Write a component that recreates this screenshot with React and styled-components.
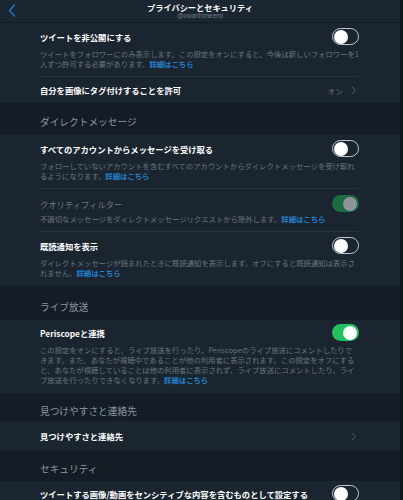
import React from 'react';
import styled, { createGlobalStyle } from 'styled-components';

const GlobalStyle = createGlobalStyle`
  html, body {
    margin: 0;
    padding: 0;
    background: #141d26;
  }
  body {
    font-family: "Noto Sans CJK JP", "Noto Sans", sans-serif;
    -webkit-font-smoothing: antialiased;
  }
`;

const Page = styled.div`
  width: 403px;
  height: 500px;
  overflow: hidden;
  box-sizing: border-box;
  background: #141d26;
  border-right: 3px solid #0f161d;
`;

const Header = styled.header`
  height: 22px;
  display: flex;
  flex-direction: column;
  align-items: center;
  justify-content: center;
  position: relative;
  background: #1b2633;
  border-bottom: 1px solid #121a22;
`;

const BackButton = styled.span`
  position: absolute;
  left: 8px;
  top: 4px;
  display: flex;
`;

const HeaderTitle = styled.div`
  color: #fff;
  font-size: 8.2px;
  font-weight: 700;
  line-height: 10px;
`;

const HeaderSub = styled.div`
  color: #6f7b87;
  font-size: 6.4px;
  line-height: 8px;
  font-family: "Liberation Sans", sans-serif;
`;

const Cell = styled.section`
  background: #1b2530;
  padding: 0 41px 0 40px;
`;

const SectionHeader = styled.div`
  height: ${(p) => p.h}px;
  box-sizing: border-box;
  padding-top: ${(p) => p.top}px;
  padding-left: 40px;
  color: #8b96a0;
  font-size: 9.7px;
  line-height: 12px;
`;

const Row = styled.div`
  padding: ${(p) => p.pt}px 0 ${(p) => p.pb}px;
  border-top: ${(p) => (p.divider ? '1px solid #27323d' : 'none')};
`;

const RowTop = styled.div`
  display: flex;
  align-items: center;
  justify-content: space-between;
  min-height: 17px;
`;

const Title = styled.div`
  color: ${(p) => (p.dim ? '#6d7883' : '#fff')};
  font-size: 8.3px;
  font-weight: ${(p) => (p.dim ? 400 : 700)};
  line-height: 12px;
`;

const DescText = styled.p`
  margin: ${(p) => p.mt || 4}px 0 0;
  color: #69747f;
  font-size: 7.35px;
  line-height: 10px;
  white-space: nowrap;
`;

const Link = styled.span`
  color: #2380cc;
  font-weight: 700;
`;

const NavRow = styled.div`
  height: ${(p) => p.h}px;
  display: flex;
  align-items: center;
  justify-content: space-between;
  border-top: ${(p) => (p.divider ? '1px solid #27323d' : 'none')};
`;

const NavValue = styled.div`
  display: flex;
  align-items: center;
  gap: 8px;
  color: #6d7883;
  font-size: 7.4px;
  margin-right: 3px;
`;

const Track = styled.div`
  width: 27px;
  height: 17px;
  box-sizing: border-box;
  border-radius: 9px;
  display: flex;
  align-items: center;
  justify-content: ${(p) => (p.on ? 'flex-end' : 'flex-start')};
  padding: 1px;
  background: ${(p) => (p.on ? (p.disabled ? '#1f6b41' : '#22c05f') : '#1b2530')};
  border: ${(p) => (p.on ? 'none' : '1px solid #c3c8cd')};
  flex-shrink: 0;
`;

const Knob = styled.div`
  width: 14px;
  height: 14px;
  border-radius: 50%;
  background: ${(p) => (p.disabled ? '#8f949a' : '#fff')};
  margin: ${(p) => (p.on ? '0 1px 0 0' : '0')};
`;

function Toggle({ on, disabled }) {
  return (
    <Track on={on} disabled={disabled}>
      <Knob on={on} disabled={disabled} />
    </Track>
  );
}

// lines are broken where the app breaks them
function Desc({ lines, mt }) {
  return (
    <DescText mt={mt}>
      {lines.map((line, i) => (
        <React.Fragment key={i}>
          {i > 0 && <br />}
          {line}
        </React.Fragment>
      ))}
      <Link>詳細はこちら</Link>
    </DescText>
  );
}

function Chevron({ color = '#5d6873', size = 9 }) {
  return (
    <svg width={size * 0.6} height={size} viewBox="0 0 6 10">
      <path d="M1 1l4 4-4 4" fill="none" stroke={color} strokeWidth="1" strokeLinecap="round" strokeLinejoin="round" />
    </svg>
  );
}

export default function App() {
  return (
    <Page>
      <GlobalStyle />
      <Header>
        <BackButton>
          <svg width="8" height="13" viewBox="0 0 8 13">
            <path d="M6.5 1L1.5 6.5l5 5.5" fill="none" stroke="#1f7fc9" strokeWidth="1.3" strokeLinecap="round" strokeLinejoin="round" />
          </svg>
        </BackButton>
        <HeaderTitle>プライバシーとセキュリティ</HeaderTitle>
        <HeaderSub>@owarihimeemi</HeaderSub>
      </Header>

      <Cell>
        <Row pt={5} pb={7}>
          <RowTop>
            <Title>ツイートを非公開にする</Title>
            <Toggle />
          </RowTop>
          <Desc
            lines={[
              'ツイートをフォロワーにのみ表示します。この設定をオンにすると、今後は新しいフォロワーを1',
              '人ずつ許可する必要があります。',
            ]}
          />
        </Row>
        <NavRow h={26} divider>
          <Title>自分を画像にタグ付けすることを許可</Title>
          <NavValue>
            オン
            <Chevron />
          </NavValue>
        </NavRow>
      </Cell>

      <SectionHeader h={32} top={13}>ダイレクトメッセージ</SectionHeader>

      <Cell>
        <Row pt={5} pb={7}>
          <RowTop>
            <Title>すべてのアカウントからメッセージを受け取る</Title>
            <Toggle />
          </RowTop>
          <Desc
            lines={[
              'フォローしていないアカウントを含むすべてのアカウントからダイレクトメッセージを受け取れ',
              'るようになります。',
            ]}
          />
        </Row>
        <Row pt={6} pb={7} divider>
          <RowTop>
            <Title dim>クオリティフィルター</Title>
            <Toggle on disabled />
          </RowTop>
          <Desc mt={2} lines={['不適切なメッセージをダイレクトメッセージリクエストから除外します。']} />
        </Row>
        <Row pt={5} pb={8} divider>
          <RowTop>
            <Title>既読通知を表示</Title>
            <Toggle />
          </RowTop>
          <Desc
            lines={[
              'ダイレクトメッセージが読まれたときに既読通知を表示します。オフにすると既読通知は表示さ',
              'れません。',
            ]}
          />
        </Row>
      </Cell>

      <SectionHeader h={34} top={15}>ライブ放送</SectionHeader>

      <Cell>
        <Row pt={4} pb={8}>
          <RowTop>
            <Title>Periscopeと連携</Title>
            <Toggle on />
          </RowTop>
          <Desc
            lines={[
              'この設定をオンにすると、ライブ放送を行ったり、Periscopeのライブ放送にコメントしたりで',
              'きます。また、あなたが視聴中であることが他の利用者に表示されます。この設定をオフにする',
              'と、あなたが視聴していることは他の利用者に表示されず、ライブ放送にコメントしたり、ライ',
              'ブ放送を行ったりできなくなります。',
            ]}
          />
        </Row>
      </Cell>

      <SectionHeader h={28} top={12}>見つけやすさと連絡先</SectionHeader>

      <Cell>
        <NavRow h={30}>
          <Title>見つけやすさと連絡先</Title>
          <NavValue>
            <Chevron />
          </NavValue>
        </NavRow>
      </Cell>

      <SectionHeader h={30} top={12}>セキュリティ</SectionHeader>

      <Cell>
        <Row pt={4} pb={8}>
          <RowTop>
            <Title>ツイートする画像/動画をセンシティブな内容を含むものとして設定する</Title>
            <Toggle />
          </RowTop>
        </Row>
      </Cell>
    </Page>
  );
}
